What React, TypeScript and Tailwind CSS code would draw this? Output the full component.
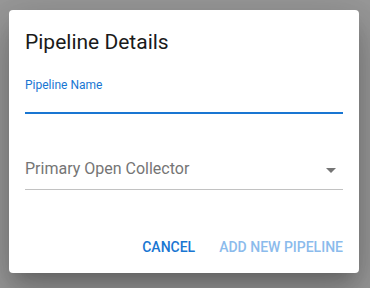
import React from "react";

export default function App() {
  return (
    <div
      className="w-[370px] h-[288px] bg-[#999999] pt-[10px] pl-[9px]"
      style={{ fontFamily: "Roboto, 'Liberation Sans', sans-serif" }}
    >
      <div className="w-[350px] h-[263px] bg-white rounded-[4px] shadow-[0_11px_15px_-7px_rgba(0,0,0,0.2),0_24px_38px_3px_rgba(0,0,0,0.14),0_9px_46px_8px_rgba(0,0,0,0.12)] flex flex-col">
        <div className="px-4 pt-4">
          <h2 className="text-[21px] leading-[32px] font-normal text-[#1a1a1a]">
            Pipeline Details
          </h2>
          <div className="mt-[19px]">
            <div className="text-[12px] leading-[16px] text-[#1976d2]">Pipeline Name</div>
            <div className="h-[19px]" />
            <div className="h-[2px] bg-[#1976d2]" />
          </div>
          <div className="mt-[43px] relative">
            <div className="text-[16px] leading-[24px] text-[#757575] pb-[8px]">
              Primary Open Collector
            </div>
            <div className="h-[1px] bg-[#c2c2c2]" />
            <svg
              className="absolute right-0 top-[1px] w-6 h-6"
              viewBox="0 0 24 24"
              fill="#757575"
            >
              <path d="M7 10l5 5 5-5z" />
            </svg>
          </div>
        </div>
        <div className="flex justify-end items-center gap-2 pr-2 mt-[39px]">
          <button className="px-2 py-[6px] text-[14px] leading-[24.5px] font-medium text-[#1976d2]">
            CANCEL
          </button>
          <button className="px-2 py-[6px] text-[14px] leading-[24.5px] font-medium text-[#8bbbec]">
            ADD NEW PIPELINE
          </button>
        </div>
      </div>
    </div>
  );
}
